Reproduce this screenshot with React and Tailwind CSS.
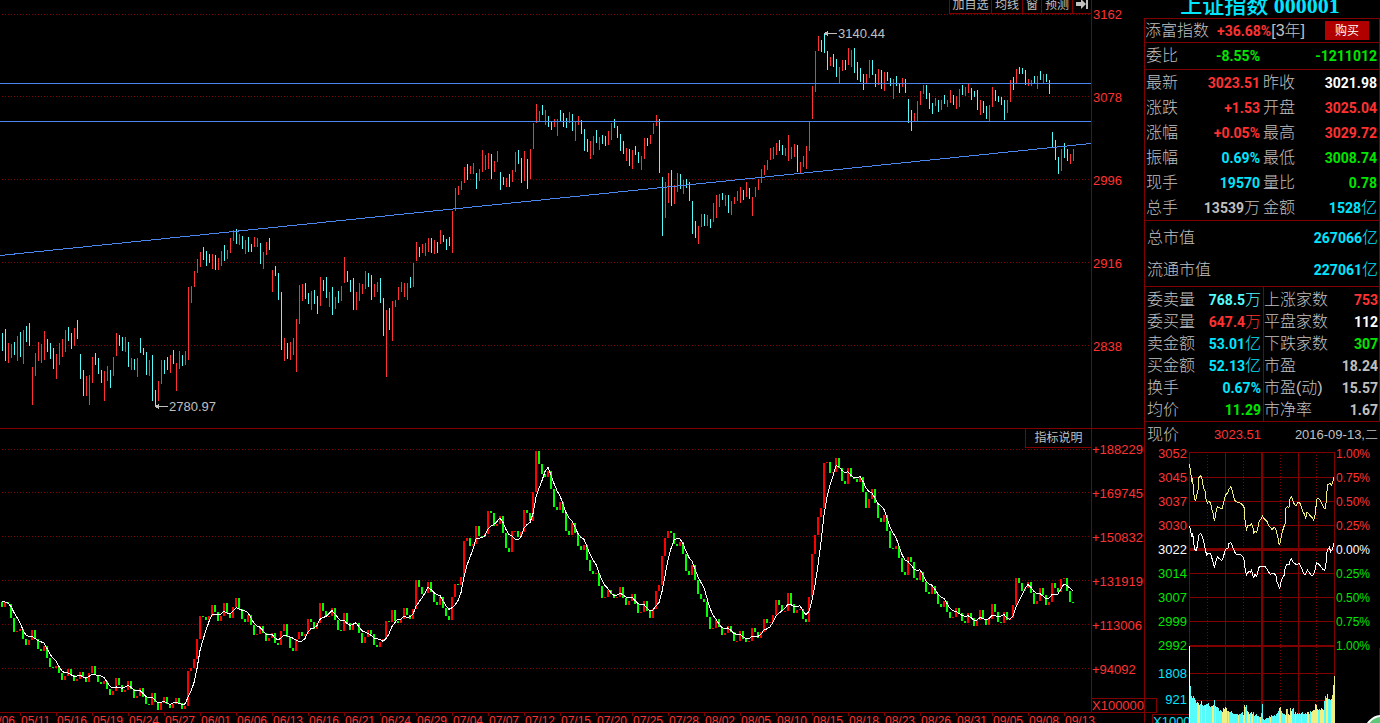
import { clsx } from 'clsx'

// One entry per bar: colour (r = up, c = down), high and low on the price panel
const PRICE_BARS = `
c333-351 c329-361 r343-363 r344-358 c342-355 r336-361 c332-357 r330-364 c326-342 c323-346
r367-405 r353-376 r342-361 r344-363 r331-360 c339-352 c343-359 c348-369 r354-379 r343-365
r339-357 r330-352 c327-341 c333-349 r328-346 c320-339 c354-379 c370-396 r376-396 r375-405
r357-383 c353-365 c358-374 c370-383 r371-401 r366-381 c370-388 r357-376 r333-356 c335-346
c337-351 r337-352 c342-367 r358-370 c359-370 r358-377 c338-353 c348-355 c352-375 r360-376
c355-401 c390-406 r381-401 r360-384 c360-374 c357-370 r355-373 c350-364 r363-391 r351-369
c355-366 r351-365 r287-360 r286-303 r271-287 r259-273 r252-267 c247-260 c251-266 c254-263
r254-269 c255-270 r258-270 r251-266 c245-261 r250-259 r238-253 r230-241 c229-244 r234-245
c236-249 r240-254 c237-252 c244-252 r237-247 r238-247 c243-264 r252-269 r242-255 c238-250
r270-292 c266-276 c273-300 c292-350 r338-361 c343-359 r342-360 r338-355 r319-372 r285-324
r284-301 c283-299 c293-304 r291-310 c290-304 c296-314 r277-306 c280-291 c277-298 r292-307
c287-315 r297-309 c291-303 r286-301 r257-283 c271-282 c280-292 c278-310 r292-310 r283-301
r284-294 r271-289 c273-287 c275-300 r284-297 r282-292 c278-303 c298-336 r310-377 c308-330
r301-341 r300-307 r287-300 r282-292 r283-297 r283-300 c277-288 r263-287 r242-261 c247-257
r244-253 r243-256 r238-252 c238-253 r240-254 c242-253 r230-244 c235-242 c239-250 c237-246
r211-253 r188-211 r186-195 r181-190 r167-183 c164-180 r166-174 r163-174 c173-189 r169-181
r150-172 r155-170 r153-169 c154-179 r161-172 r151-162 c172-190 c177-185 r178-187 c174-187
r170-182 r152-172 c150-164 c158-183 r151-181 c159-189 r149-179 r123-149 r104-123 r111-121
c105-115 r110-125 c116-127 c121-130 r119-127 r119-136 c110-121 c113-127 c118-128 r112-123
c114-131 r122-141 r116-125 c120-134 c129-151 c139-152 r141-159 r136-155 c130-143 r137-150
c135-144 c136-146 r131-145 r123-140 c119-128 c126-138 c134-151 c141-154 r148-161 c149-166
r150-169 c146-155 c152-163 r156-170 r138-159 c138-146 r135-144 r123-134 r115-126 c119-173
c177-236 r182-218 r173-203 c170-206 r185-204 r173-192 c174-189 r180-194 c179-188 c182-201
c201-234 c221-238 r226-244 r214-227 c214-226 r215-226 c219-228 r203-222 r195-218 r194-207
c193-200 r195-206 c195-213 r201-215 r197-204 r191-201 r187-203 c190-200 r182-197 c188-199
r197-216 r187-197 r179-190 r169-183 r165-175 r160-170 r148-160 r147-159 r143-155 c140-151
c145-155 r148-156 r135-161 r147-159 r144-157 c145-172 r162-174 r156-167 r146-169 r122-151
r86-119 r51-92 r36-51 c40-52 c34-53 c51-70 r57-66 c54-67 c59-77 r67-83
r60-71 c60-70 r48-65 r50-67 c48-73 c62-80 c68-82 c74-90 r74-83 r60-78
c60-75 c74-87 r69-85 c70-89 r72-91 c72-81 c78-86 r79-99 c76-86 c84-93
r78-87 c79-93 c99-123 c110-131 r113-121 r101-121 r91-105 r85-94 c85-99 c93-109
c103-114 r98-106 c100-112 r100-110 c95-104 r100-107 r90-103 c95-105 r96-109 r89-107
c85-95 r87-96 r84-93 c88-100 c91-97 c90-110 r100-115 c101-113 c106-119 r105-121
r87-107 c90-101 c96-102 c97-105 c100-120 r100-113 r80-102 c77-90 r69-83 c67-74
c68-74 c70-85 r79-86 r80-86 c76-83 r76-89 c71-80 r74-83 c74-82 c80-94
c132-148 c140-160 c157-174 r149-171 c143-158 c149-161 r154-164 r149-161
`
  .trim()
  .split(/\s+/)
  .map(s => {
    const [top, bottom] = s.slice(1).split('-').map(Number)
    return { up: s[0] === 'r', top, bottom }
  })

// Indicator closes, counted down from the panel top, three steps to a pixel.
// The first four only feed the moving average.
const LEVELS = [
  500, 505, 512, 516,
  530, 516, 522, 565, 606, 603, 597, 627, 644, 630, 600, 627, 656, 664, 648, 683, 712, 715, 709, 730,
  751, 738, 716, 736, 754, 746, 727, 740, 756, 729, 708, 735, 755, 762, 753, 777, 796, 783, 744, 765,
  785, 780, 754, 778, 803, 798, 774, 800, 821, 824, 790, 816, 840, 819, 801, 822, 834, 821, 804, 819,
  837, 828, 723, 714, 687, 627, 558, 561, 570, 558, 525, 546, 572, 558, 520, 548, 563, 530, 505, 537,
  568, 575, 556, 586, 614, 613, 588, 610, 634, 625, 610, 638, 644, 602, 583, 622, 653, 664, 627, 606,
  618, 612, 567, 577, 597, 579, 519, 543, 558, 557, 533, 570, 600, 603, 548, 579, 601, 583, 580, 608,
  640, 621, 600, 612, 646, 650, 635, 626, 572, 575, 540, 572, 580, 568, 534, 555, 567, 538, 450, 471,
  493, 489, 455, 486, 517, 525, 501, 535, 559, 570, 501, 462, 466, 440, 333, 324, 348, 343, 288, 318,
  322, 312, 242, 249, 289, 281, 258, 308, 355, 366, 304, 303, 320, 307, 239, 248, 274, 186, 64, 102,
  132, 140, 123, 177, 231, 240, 215, 248, 303, 314, 280, 309, 348, 360, 344, 390, 423, 432, 429, 468,
  503, 502, 479, 493, 503, 500, 472, 504, 526, 513, 492, 521, 549, 546, 512, 543, 563, 537, 482, 465,
  377, 324, 303, 308, 341, 347, 335, 372, 423, 435, 404, 451, 491, 506, 516, 560, 598, 595, 567, 591,
  614, 609, 588, 606, 634, 633, 603, 626, 637, 634, 594, 606, 625, 605, 567, 580, 577, 555, 510, 525,
  543, 542, 489, 523, 549, 541, 536, 567, 576, 501, 371, 315, 260, 233, 100, 97, 130, 126, 84, 115,
  153, 161, 113, 140, 148, 157, 141, 186, 233, 208, 177, 219, 264, 275, 255, 302, 353, 357, 347, 384,
  427, 436, 381, 396, 444, 451, 426, 456, 486, 492, 468, 491, 522, 531, 513, 546, 563, 561, 534, 549,
  573, 580, 549, 564, 588, 570, 540, 567, 586, 567, 521, 546, 577, 580, 546, 571, 565, 524, 444, 459,
  482, 473, 457, 489, 521, 513, 474, 495, 526, 515, 459, 474, 485, 448, 443, 482, 516, 520,
]

const LEVEL_BARS = LEVELS.slice(4).map((close, i) => {
  const prev = LEVELS[i + 3]
  const window = LEVELS.slice(i, i + 5)
  const top = Math.round(Math.min(prev, close) / 3)
  const bottom = Math.round(Math.max(prev, close) / 3)
  return {
    up: close < prev,
    top,
    height: Math.max(1, bottom - top),
    ma: window.reduce((a, b) => a + b, 0) / 15,
  }
})

const DATES = [
  '05/06', '05/11', '05/16', '05/19', '05/24', '05/27', '06/01', '06/06', '06/13', '06/16', '06/21',
  '06/24', '06/29', '07/04', '07/07', '07/12', '07/15', '07/20', '07/25', '07/28', '08/02', '08/05',
  '08/10', '08/15', '08/18', '08/23', '08/26', '08/31', '09/05', '09/08', '09/13',
]

const QUOTES = [
  ['最新', '3023.51', 'text-[#ff3232]', '昨收', '3021.98', 'text-white'],
  ['涨跌', '+1.53', 'text-[#ff3232]', '开盘', '3025.04', 'text-[#ff3232]'],
  ['涨幅', '+0.05%', 'text-[#ff3232]', '最高', '3029.72', 'text-[#ff3232]'],
  ['振幅', '0.69%', 'text-[#00e6ff]', '最低', '3008.74', 'text-[#00e600]'],
  ['现手', '19570', 'text-[#00e6ff]', '量比', '0.78', 'text-[#00e600]'],
  ['总手', '13539万', 'text-[#c0c0c0]', '金额', '1528亿', 'text-[#00e6ff]'],
]

const CAPS = [
  ['总市值', '267066亿'],
  ['流通市值', '227061亿'],
]

const STATS = [
  ['委卖量', '768.5万', 'text-[#54fcfc]', '上涨家数', '753', 'text-[#ff3232]'],
  ['委买量', '647.4万', 'text-[#ff3232]', '平盘家数', '112', 'text-white'],
  ['卖金额', '53.01亿', 'text-[#00e6ff]', '下跌家数', '307', 'text-[#00e600]'],
  ['买金额', '52.13亿', 'text-[#00e6ff]', '市盈', '18.24', 'text-[#c0c0c0]'],
  ['换手', '0.67%', 'text-[#00e6ff]', '市盈(动)', '15.57', 'text-[#c0c0c0]'],
  ['均价', '11.29', 'text-[#00e600]', '市净率', '1.67', 'text-[#c0c0c0]'],
]

const LEADING_LINE =
  '148,72 152,95 155,122 158,115 160,150 163,172 166,184 169,172 172,158 175,145 177,112 181,108 185,112 188,130 192,148 195,152 198,178 202,190 206,184 212,190 215,205 219,220 223,240 226,232 229,208 233,200 240,204 247,204 250,190 254,175 257,164 262,160 267,148 273,140 277,152 280,168 284,180 290,186 297,188 303,190 309,196 313,205 314,230 317,258 320,268 324,256 330,258 334,250 338,258 341,278 345,274 349,276 353,268 357,245 362,238 367,228 372,235 377,240 382,246 387,258 392,262 396,270 401,262 407,266 410,278 414,295 418,316 422,300 426,280 430,265 435,252 437,205 442,200 447,202 449,180 454,170 458,180 463,193 468,197 473,188 479,188 484,200 489,215 493,222 497,236 501,216 506,220 511,228 516,232 521,240 525,225 528,200 530,178 534,174 539,178 544,188 549,198 555,208 558,190 560,165 563,134 569,130 575,136 580,120 582,112'

const INDEX_LINE =
  '148,258 152,270 155,292 158,278 161,310 164,328 169,332 172,318 175,295 177,284 182,280 186,288 190,300 193,312 196,330 200,345 205,340 211,340 215,352 219,365 223,380 227,368 232,350 238,356 245,362 249,355 253,340 257,328 264,324 267,310 272,308 277,318 282,330 287,342 293,345 299,342 305,346 310,352 314,370 316,395 320,405 326,394 331,396 335,390 339,408 341,412 345,402 349,408 353,400 356,384 361,378 368,380 374,378 380,386 386,396 391,404 397,400 404,402 408,408 411,425 415,435 419,445 423,425 428,412 433,405 436,380 441,374 447,374 450,362 454,356 459,366 466,372 473,372 478,370 482,380 487,388 491,402 496,404 502,390 507,396 512,404 518,408 522,400 526,388 529,368 534,370 539,376 543,380 548,388 554,392 558,370 560,340 564,328 568,322 572,335 577,328 580,318 582,308'

// Minute volume: heights in the same units as the intraday lines
const VOLUMES = [
  111, 81, 75, 81, 75, 69, 60, 63, 60, 54, 57, 66, 54, 51, 54, 54, 57, 57, 60, 51, 48, 51, 51, 54, 69, 51,
  48, 48, 45, 36, 39, 36, 33, 45, 42, 48, 45, 36, 36, 33, 33, 36, 30, 27, 27, 27, 27, 27, 24, 27, 27, 30,
  33, 24, 54, 48, 54, 36, 33, 27, 30, 33, 27, 33, 21, 24, 27, 21, 21, 18, 18, 30, 57, 12, 9, 12, 15, 15,
  15, 21, 18, 24, 21, 21, 24, 21, 27, 30, 36, 45, 48, 36, 30, 27, 27, 24, 42, 42, 27, 24, 45, 36, 42, 45,
  27, 33, 27, 30, 27, 30, 27, 30, 33, 27, 27, 30, 27, 33, 33, 27, 36, 33, 36, 39, 39, 57, 54, 42, 39, 42,
  39, 45, 42, 39, 66, 81, 75, 87, 72, 72, 69, 72, 84, 114, 141,
]
const VOLUME_COLORS =
  'cccccccyyycycccyccccccyycyccccccyyyyycycccccccccyccccyyccyyycyyccccyccycccccccccyccccccccyyccccyycyyyycccycccccycccccyyccyyyyyyyccyyyyccyycccyyyy'

const MINI_LABELS = [
  ['3052', '1.00%'],
  ['3045', '0.75%'],
  ['3037', '0.50%'],
  ['3030', '0.25%'],
  ['3022', '0.00%'],
  ['3014', '0.25%'],
  ['3007', '0.50%'],
  ['2999', '0.75%'],
  ['2992', '1.00%'],
]

const miniColor = i => (i < 4 ? 'text-[#ff3232]' : i === 4 ? 'text-white' : 'text-[#00e600]')

function PriceChart() {
  return (
    <svg viewBox="0 0 1091 428" className="block w-full h-auto" shapeRendering="crispEdges">
      {[14, 96, 179, 262, 345].map(y => (
        <line key={y} x1="2" x2="1091" y1={y + 0.5} y2={y + 0.5} stroke="#800000" strokeDasharray="1 2" />
      ))}
      {PRICE_BARS.map((b, i) => (
        <rect key={i} x={2 + i * 3} y={b.top} width="1" height={b.bottom - b.top} fill={b.up ? '#ff3232' : '#54fcfc'} />
      ))}
      <path d="M0 83.5H1091M0 121.5H1091M0 255.5L1091 143.5" stroke="#4b87f0" fill="none" />
      <path d="M824 33.5H837M155 406.5H168" stroke="#c0c0c0" />
      <path d="M824 33.5l4-3v6zM155 406.5l4-3v6z" fill="#c0c0c0" />
      <text x="838" y="38" className="text-[13px] fill-[#c0c0c0]">3140.44</text>
      <text x="169" y="411" className="text-[13px] fill-[#c0c0c0]">2780.97</text>
    </svg>
  )
}

function IndicatorChart() {
  return (
    <svg viewBox="0 0 1091 283" className="block w-full h-auto overflow-visible" shapeRendering="crispEdges">
      {[20, 63, 107, 151, 195, 239].map(y => (
        <line key={y} x1="2" x2="1091" y1={y + 0.5} y2={y + 0.5} stroke="#800000" strokeDasharray="1 2" />
      ))}
      <g transform="translate(0 1)">
        {LEVEL_BARS.map((b, i) => (
          <rect key={i} x={1 + i * 3} y={b.top} width="2" height={b.height} fill={b.up ? '#ff0000' : '#00ff00'} />
        ))}
        <polyline
          points={LEVEL_BARS.map((b, i) => `${2 + i * 3},${b.ma}`).join(' ')}
          fill="none"
          stroke="#fff"
        />
      </g>
      <path d="M0 283.5H1092" stroke="#800000" />
      {DATES.map((d, i) => (
        <g key={d}>
          <path d={`M${i * 36 - 15.5} 284v3`} stroke="#800000" />
          <text x={i * 36 - 15} y="296" className="text-[12px] fill-[#ff3232]">{d}</text>
        </g>
      ))}
    </svg>
  )
}

function MiniChart() {
  return (
    <svg viewBox="147 36 438 813" className="block w-[146px] h-[271px] shrink-0 mt-1" shapeRendering="crispEdges">
      <g stroke="#800000" strokeWidth="3" fill="none">
        {[112, 184, 256, 400, 472, 544, 700, 781].map(y => (
          <line key={y} x1="147" x2="585" y1={y} y2={y} />
        ))}
        <path d="M148.5 37V849M583.5 37V849M147 37.5H585M256.5 37V849M475.5 37V849" />
        <path d="M202.5 45V849M310.5 45V849M421.5 45V849M529.5 45V849" strokeDasharray="3 6" />
        <path d="M366 37V849M147 618H585" strokeWidth="6" />
        <path d="M147 328.5H585" strokeWidth="9" />
      </g>
      {VOLUMES.map((v, i) => (
        <rect key={i} x={150 + i * 3} y={849 - v} width="3" height={v} fill={VOLUME_COLORS[i] === 'y' ? '#f0f080' : '#54fcfc'} />
      ))}
      <path d="M148.5 618V849" stroke="#fff" strokeWidth="3" />
      <polyline points={LEADING_LINE} fill="none" stroke="#f0f080" strokeWidth="3" />
      <polyline points={INDEX_LINE} fill="none" stroke="#fff" strokeWidth="3" />
    </svg>
  )
}

function Pair({ label, value, color }) {
  return (
    <div className="flex-1 flex items-center justify-between">
      <span>{label}</span>
      <Value className={color}>{value}</Value>
    </div>
  )
}

// Digits are bold, a trailing unit keeps the label face
function Value({ children, className }) {
  const unit = /[万亿]$/.test(children) ? children.slice(-1) : ''
  return (
    <span className={clsx('flex items-center', className)}>
      <b className="font-[Roboto] font-bold text-[14px]">{unit ? children.slice(0, -1) : children}</b>
      {unit}
    </span>
  )
}

function Toolbar() {
  return (
    <div className="absolute top-0 right-0 flex h-[14px] border-b border-l border-[#800000] bg-black text-[12px] leading-[10px] text-[#c0c0c0]">
      <button className="w-[42px] border-r border-[#800000] whitespace-nowrap flex justify-center">加自选</button>
      <button className="w-[31px] border-r border-[#800000] whitespace-nowrap flex justify-center">均线</button>
      <button className="w-[19px] border-r border-[#800000] flex justify-center">窗</button>
      <button className="w-[31px] border-r border-[#800000] whitespace-nowrap flex justify-center">预测</button>
      <button className="w-[18px] flex justify-center" aria-label="展开">
        <svg viewBox="0 0 12 9" className="w-3 h-[9px]" fill="#c0c0c0">
          <path d="M0 2h5V-1l5 5-5 5V6H0zM10 0h2v9h-2z" />
        </svg>
      </button>
    </div>
  )
}

export default function App() {
  return (
    <div className="relative flex h-screen overflow-hidden bg-black text-[#c0c0c0] font-['Liberation_Sans','Noto_Sans_CJK_SC',sans-serif]">
      <main className="flex-1 min-w-0">
        {/* Price panel */}
        <section className="flex">
          <div className="relative flex-1 min-w-0">
            <PriceChart />
            <Toolbar />
          </div>
          <div className="w-[53px] border-l border-[#800000] pl-px pt-[7px] text-[13px] leading-4 text-[#ff3232]">
            {['3162', '3078', '2996', '2916', '2838'].map(p => (
              <div key={p} className="h-[83px]">{p}</div>
            ))}
          </div>
        </section>

        {/* Indicator panel */}
        <section className="flex border-t border-[#800000]">
          <div className="relative flex-1 min-w-0">
            <IndicatorChart />
            <button className="absolute top-0 right-0 w-[66px] h-[19px] border-l border-b border-[#800000] bg-black text-[12px] leading-[18px]">
              指标说明
            </button>
          </div>
          <div className="relative w-[53px] border-l border-[#800000] pt-[13px] text-[13px] leading-4 text-[#ff3232]">
            {['+188229', '+169745', '+150832', '+131919', '+113006', '+94092'].map(v => (
              <div key={v} className="h-11">{v}</div>
            ))}
            <div className="absolute left-0 bottom-0 z-10 w-[65px] h-[15px] border border-l-0 border-[#800000] leading-[14px] translate-y-px">
              X100000
            </div>
          </div>
        </section>
      </main>

      <aside className="w-[236px] shrink-0 flex flex-col text-[16px] leading-5 font-light">
        <h1 className="h-[18px] shrink-0 leading-[11px] text-center text-[22px] font-medium text-[#00e6ff] whitespace-nowrap pr-5 pl-4 font-['Liberation_Serif','Noto_Sans_CJK_SC',serif]">
          上证指数 <b>000001</b>
        </h1>

        <div className="flex-1 border-l border-[#800000]">
          <div className="border-t border-r border-[#800000]">
            <div className="flex items-center h-[23px] whitespace-nowrap">
              <span>添富指数</span>
              <b className="ml-2 font-[Roboto] font-bold text-[14px] text-[#ff3232]">+36.68%</b>
              <span>[3年]</span>
              <button className="ml-auto mr-2.5 w-11 h-[19px] bg-[#b00000] text-[12px] leading-[18px] font-normal text-white">购买</button>
            </div>
            <div className="flex items-center h-[27px] border-t border-[#800000] pl-px pr-0.5">
              <span className="w-[50px]">委比</span>
              <Value className="w-[64px] justify-end text-[#00e600]">-8.55%</Value>
              <Value className="ml-auto text-[#00e600]">-1211012</Value>
            </div>
            <div className="border-t border-[#800000] pl-px pr-0.5">
              {QUOTES.map(([l1, v1, c1, l2, v2, c2]) => (
                <div key={l1} className="flex h-[25px] gap-[3px]">
                  <Pair label={l1} value={v1} color={c1} />
                  <Pair label={l2} value={v2} color={c2} />
                </div>
              ))}
            </div>
            <div className="border-t border-[#800000] pt-px pl-0.5 pr-px">
              {CAPS.map(([label, value]) => (
                <div key={label} className="flex h-8">
                  <Pair label={label} value={value} color="text-[#00e6ff]" />
                </div>
              ))}
            </div>
            <div className="flex border-y border-[#800000]">
              <div className="flex-1 border-r border-[#800000] pt-0.5 px-0.5">
                {STATS.map(([label, value, color]) => (
                  <div key={label} className="flex h-[22px]">
                    <Pair label={label} value={value} color={color} />
                  </div>
                ))}
              </div>
              <div className="flex-1 pt-0.5 pr-px">
                {STATS.map(([, , , label, value, color]) => (
                  <div key={label} className="flex h-[22px]">
                    <Pair label={label} value={value} color={color} />
                  </div>
                ))}
              </div>
            </div>
          </div>

          <div className="flex items-center h-[26px] pl-0.5 pr-0.5">
            <span className="w-[50px]">现价</span>
            <span className="w-[64px] text-right text-[13px] font-normal text-[#ff3232]">3023.51</span>
            <span className="ml-auto text-[13px]">2016-09-13,二</span>
          </div>

          {/* Intraday chart */}
          <div className="flex font-normal">
            <div className="w-11 flex flex-col items-end gap-3 pr-0.5 text-[13px] leading-3">
              {MINI_LABELS.map(([price], i) => (
                <span key={price} className={miniColor(i)}>{price}</span>
              ))}
              <span className="mt-1 text-[#00e6ff]">1808</span>
              <span className="mt-0.5 text-[#00e6ff]">921</span>
              <span className="-mt-1 -mr-0.5 w-[37px] h-3 border-t border-l border-[#800000] text-[#00e6ff] leading-[13px] overflow-hidden">X1000</span>
            </div>
            <MiniChart />
            <div className="flex-1 flex flex-col gap-3 pl-px text-[12px] leading-3">
              {MINI_LABELS.map(([price, pct], i) => (
                <span key={price} className={miniColor(i)}>{pct}</span>
              ))}
              <div className="flex-1 -mt-4 border-r border-[#800000]" />
            </div>
          </div>
        </div>
      </aside>

      <div className="absolute -right-5 -bottom-7 w-9 h-9 rounded-full border-2 border-white bg-[#5fc878]" />
    </div>
  )
}
